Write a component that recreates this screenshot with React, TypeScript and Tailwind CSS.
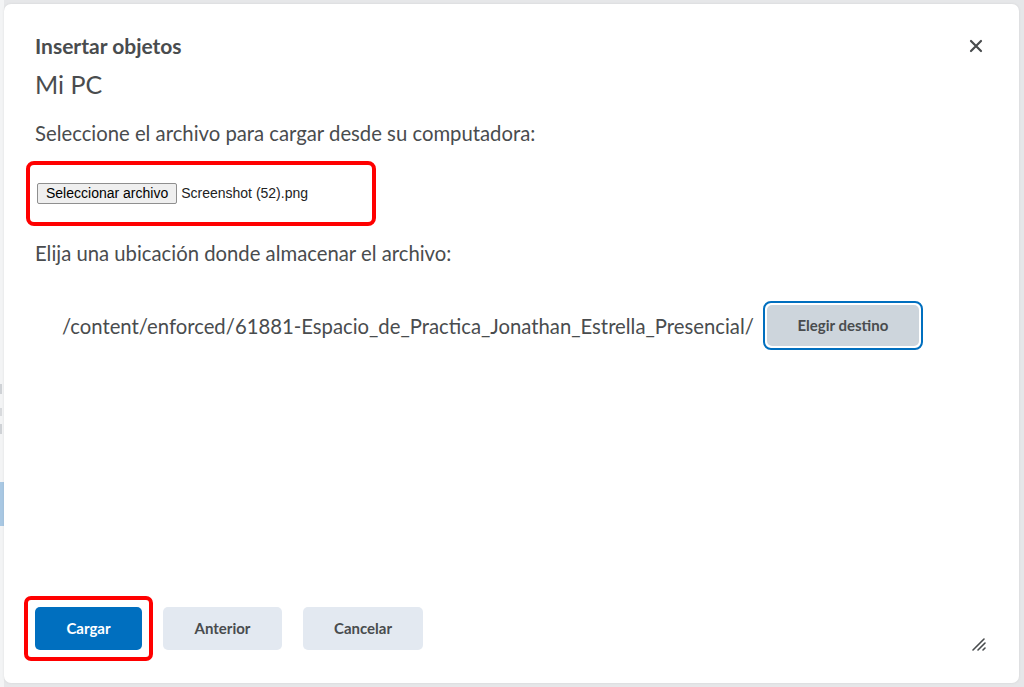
export default function App() {
  return (
    <div className="relative h-[687px] w-[1024px] overflow-hidden bg-[#e6e7e9] font-['Lato','Liberation_Sans',sans-serif] text-[#494c4e]">
      {/* page peeking out on the left */}
      <div className="absolute left-0 top-0 h-full w-[4px] bg-[#f3f4f5]">
        <div className="mt-[384px] h-[10px] w-[2px] bg-[#cfd2d6]" />
        <div className="mt-[14px] h-[8px] w-[2px] bg-[#d8dadd]" />
        <div className="mt-[8px] h-[10px] w-[2px] bg-[#cfd2d6]" />
        <div className="mt-[48px] h-[44px] w-[4px] bg-[#a9c8e3]" />
      </div>

      <div className="absolute left-[4px] top-[4px] flex h-[679px] w-[1015px] flex-col rounded-[7px] bg-white px-[31px] pb-[22px] pt-[28px] shadow-[0_0_3px_rgba(0,0,0,0.08)]">
        <div className="flex items-center justify-between">
          <h1 className="text-[21px] font-bold leading-[27px]">Insertar objetos</h1>
          <button className="mr-[5px] text-[#494c4e]" aria-label="Cerrar">
            <svg width="14" height="14" viewBox="0 0 14 14">
              <path d="M2 2L12 12M12 2L2 12" stroke="currentColor" strokeWidth="2.2" strokeLinecap="round" />
            </svg>
          </button>
        </div>
        <h2 className="mt-[10px] text-[25px] leading-[30px]">Mi PC</h2>

        <p className="mt-[20px] text-[20.3px] leading-[28px]">
          Seleccione el archivo para cargar desde su computadora:
        </p>

        <div className="-ml-[9px] mt-[14px] flex h-[65px] w-[350px] items-center rounded-[8px] border-[4px] border-[#ff0000] pl-[7px]">
          <span className="rounded-[2px] border border-[#8f8f8f] bg-[#efefef] px-[8px] font-['Liberation_Sans',Arial,sans-serif] text-[14px] leading-[19px] text-black">
            Seleccionar archivo
          </span>
          <span className="ml-[4px] font-['Liberation_Sans',Arial,sans-serif] text-[14px] text-[#222]">
            Screenshot (52).png
          </span>
        </div>

        <p className="mt-[13px] text-[20.3px] leading-[28px]">
          Elija una ubicación donde almacenar el archivo:
        </p>

        <div className="ml-[27px] mt-[34px] flex items-center gap-[9px]">
          <span className="text-[20.3px] leading-[28px]">
            /content/enforced/61881-Espacio_de_Practica_Jonathan_Estrella_Presencial/
          </span>
          <div className="rounded-[8px] border-[2px] border-[#006fbf] p-[2px]">
            <button className="h-[41px] w-[152px] rounded-[5px] bg-[#cdd5dc] text-[15px] font-bold text-[#494c4e]">
              Elegir destino
            </button>
          </div>
        </div>

        <div className="flex-1" />

        <div className="flex items-end justify-between">
          <div className="flex items-center">
            <div className="-ml-[11px] rounded-[7px] border-[4px] border-[#ff0000] p-[7px]">
              <button className="h-[43px] w-[107px] rounded-[5px] bg-[#006fbf] text-[15px] font-bold text-white">
                Cargar
              </button>
            </div>
            <button className="ml-[10px] h-[43px] w-[119px] rounded-[5px] bg-[#e3e9f1] text-[15px] font-bold text-[#494c4e]">
              Anterior
            </button>
            <button className="ml-[21px] h-[43px] w-[120px] rounded-[5px] bg-[#e3e9f1] text-[15px] font-bold text-[#494c4e]">
              Cancelar
            </button>
          </div>
          <svg className="mb-[10px] mr-[2px]" width="14" height="14" viewBox="0 0 14 14">
            <path d="M1 13L12 2M6 13L13 6M11 13L13 11" stroke="#494c4e" strokeWidth="1.6" strokeLinecap="round" />
          </svg>
        </div>
      </div>
    </div>
  );
}
